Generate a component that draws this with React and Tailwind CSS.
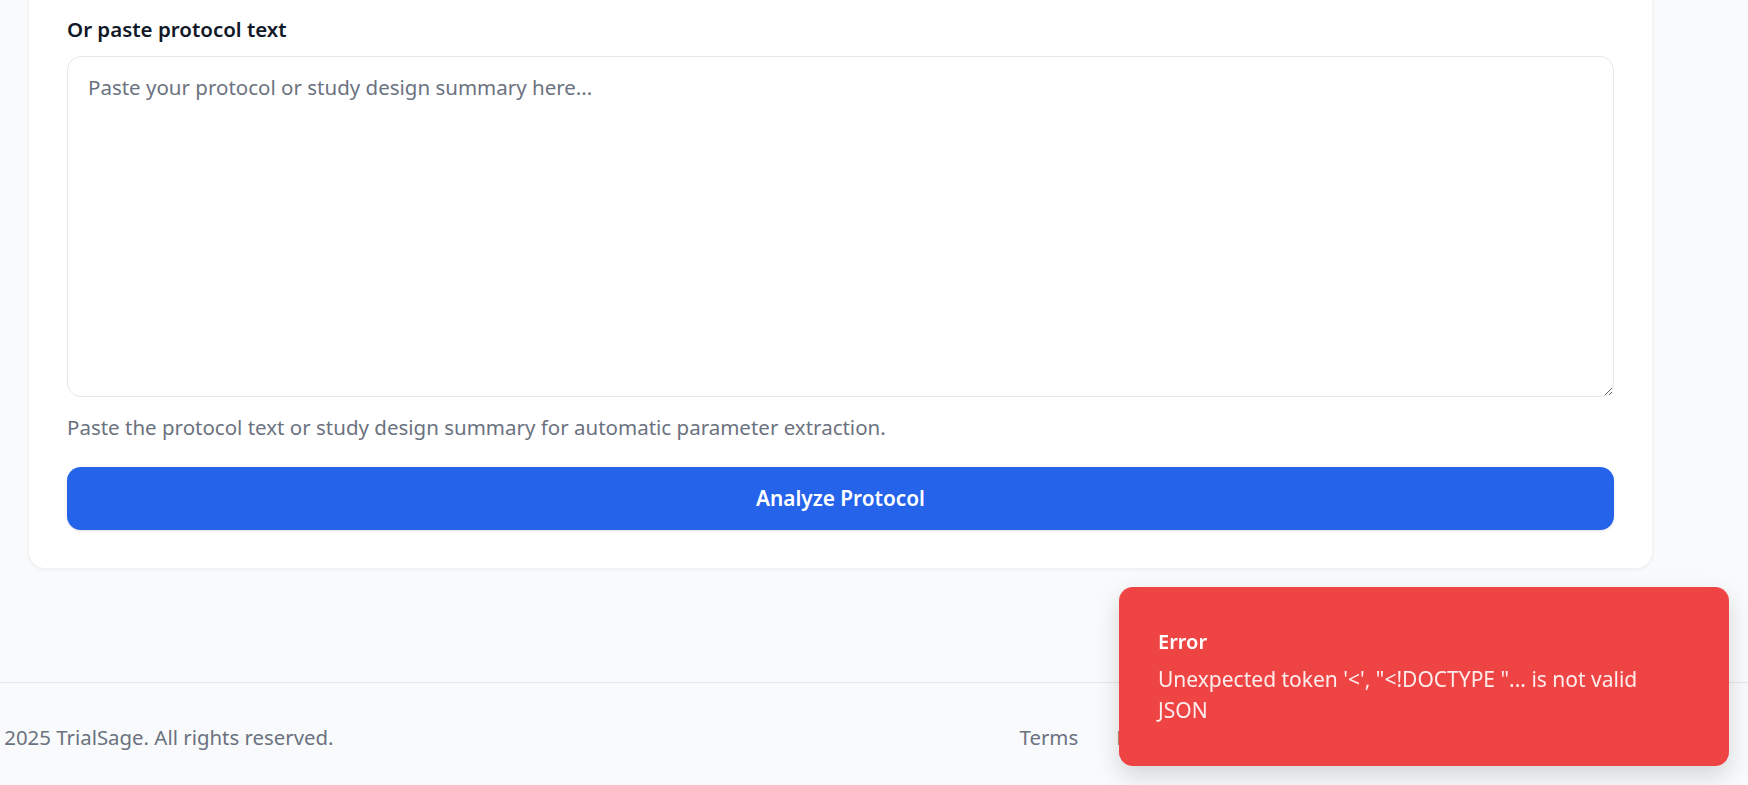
import { useState } from "react";

const font = { fontFamily: '"Segoe UI", "Noto Sans", "Open Sans", sans-serif' };

function Toast({ title, message }) {
  return (
    <div className="fixed bottom-[19px] right-[19px] w-[610px] rounded-[14px] bg-[#ef4444] px-[39px] pt-[41px] pb-[40px] text-white shadow-[0_10px_25px_rgba(0,0,0,0.15)]">
      <div className="text-[20px] font-semibold leading-[28px]">{title}</div>
      <div className="mt-[8px] text-[21px] leading-[31px] text-white/90">{message}</div>
    </div>
  );
}

export default function App() {
  const [text, setText] = useState("");

  return (
    <div className="min-h-screen overflow-hidden bg-[#f9fafb]" style={font}>
      <main className="pl-[29px]">
        <section className="-mt-[22px] w-[1623px] rounded-[16px] bg-white p-[38px] shadow-[0_1px_4px_rgba(0,0,0,0.07)]">
          <label className="block text-[20.5px] font-semibold leading-[26px] text-[#111827]">Or paste protocol text</label>
          <textarea
            value={text}
            onChange={(e) => setText(e.target.value)}
            placeholder="Paste your protocol or study design summary here..."
            className="mt-[14px] block h-[341px] w-full rounded-[14px] border border-[#e5e7eb] px-[20px] py-[15px] text-[20.5px] leading-[30px] text-[#111827] outline-none placeholder:text-[#6b7280]"
          />
          <p className="mt-[17px] text-[20.5px] leading-[26px] text-[#6b7280]">
            Paste the protocol text or study design summary for automatic parameter extraction.
          </p>
          <button className="mt-[27px] flex h-[63px] w-full items-center justify-center rounded-[14px] bg-[#2563eb] text-[20.8px] font-semibold text-white shadow-sm">
            Analyze Protocol
          </button>
        </section>
      </main>

      <footer className="mt-[114px] border-t border-[#e5e7eb] pt-[41px] pb-[42px]">
        <div className="-ml-[18px] flex w-[1314px] items-center justify-between text-[20.4px] leading-[26px] text-[#6b7280]">
          <span>© 2025 TrialSage. All rights reserved.</span>
          <nav className="flex gap-[38px]">
            <a>Terms</a>
            <a>Privacy</a>
            <a>Contact</a>
          </nav>
        </div>
      </footer>

      <Toast title="Error" message={'Unexpected token \'<\', "<!DOCTYPE "... is not valid JSON'} />
    </div>
  );
}
